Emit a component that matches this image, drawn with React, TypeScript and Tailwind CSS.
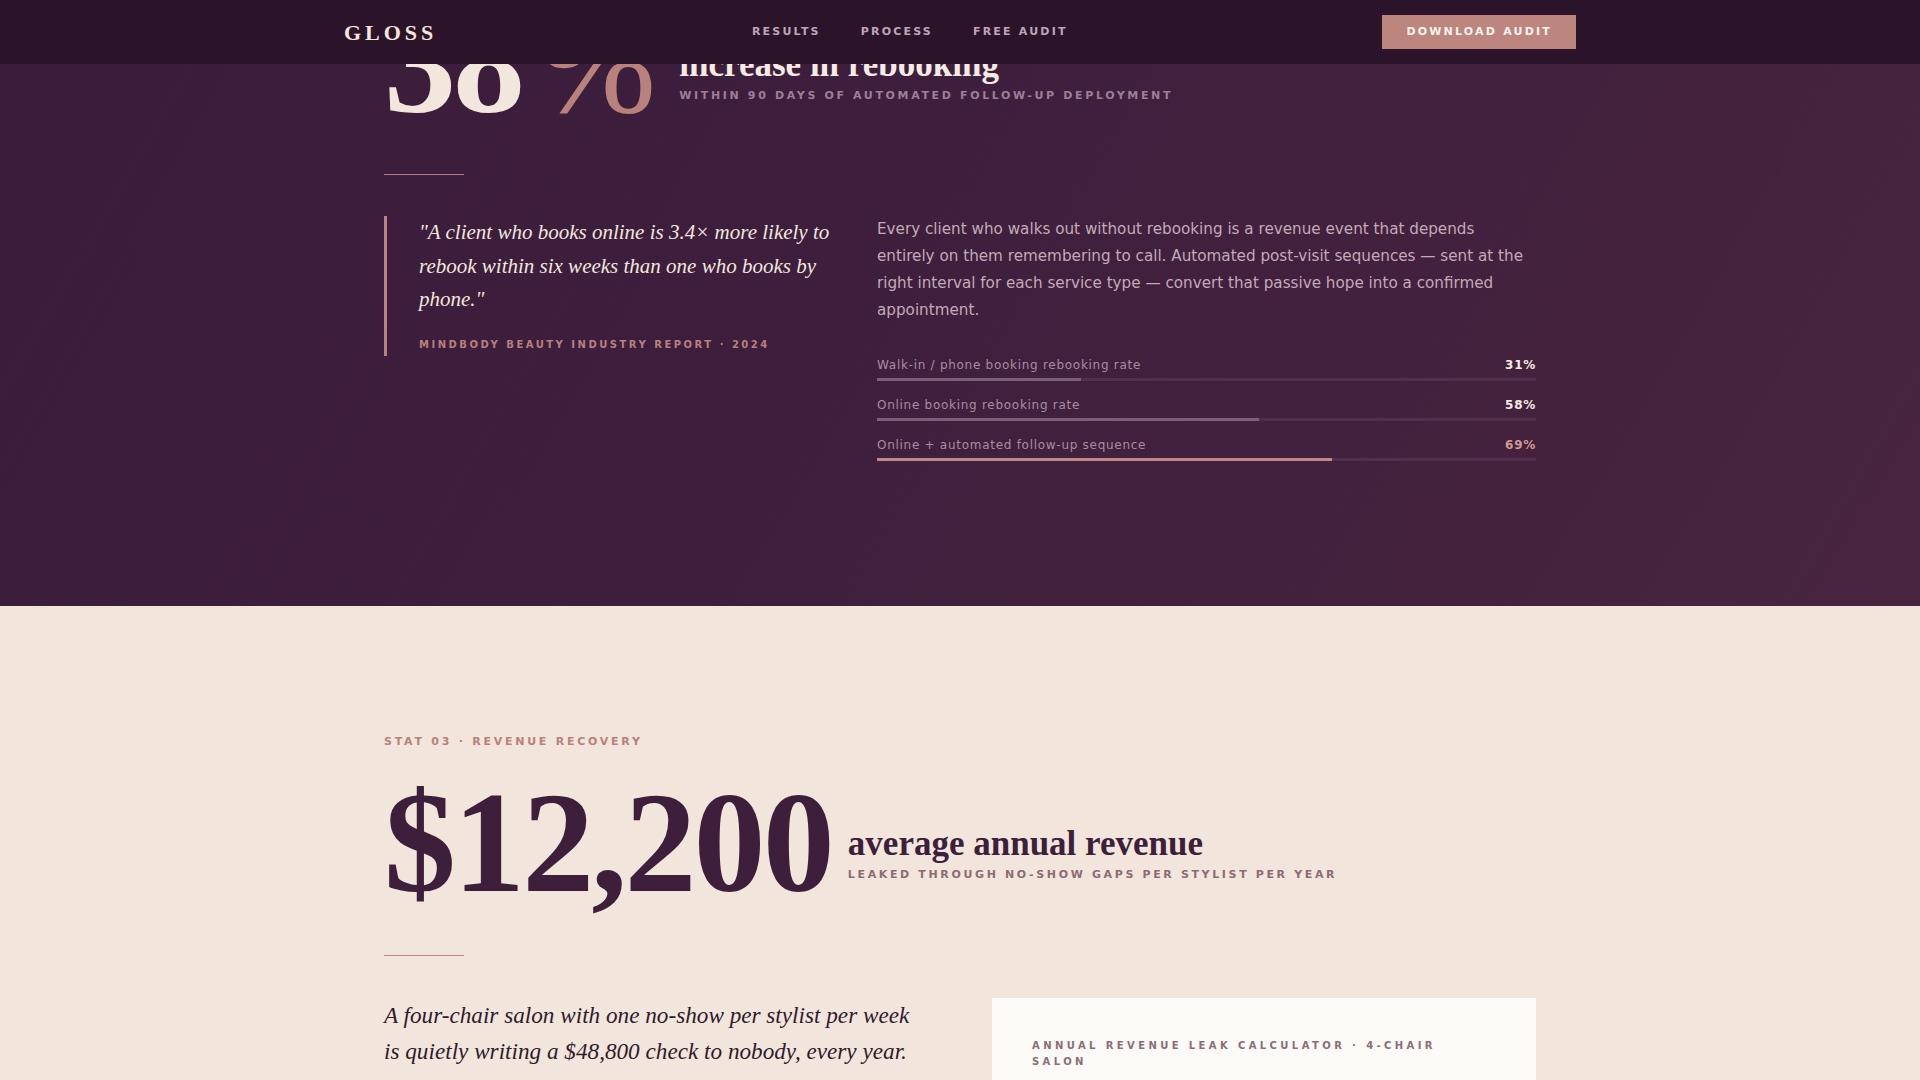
const bars = [
  { label: "Walk-in / phone booking rebooking rate", value: 31, accent: false },
  { label: "Online booking rebooking rate", value: 58, accent: false },
  { label: "Online + automated follow-up sequence", value: 69, accent: true },
];

const leakRows = [
  { label: "Stylists", value: "4" },
  { label: "No-shows per stylist / week", value: "1" },
  { label: "Average ticket", value: "$235" },
  { label: "Weeks open per year", value: "52" },
];

function NavBar() {
  return (
    <nav className="absolute inset-x-0 top-0 z-10 h-16 bg-[#2b1429]">
      <div className="mx-auto flex h-full max-w-7xl items-center justify-between px-6">
        <span className="font-['Liberation_Serif',serif] text-[22px] font-semibold tracking-[0.18em] text-[#f3e6dc]">
          GLOSS
        </span>
        <div className="flex gap-10 text-[11px] font-semibold tracking-[0.2em] text-[#bfa6b6]">
          <a href="#results">RESULTS</a>
          <a href="#process">PROCESS</a>
          <a href="#audit">FREE AUDIT</a>
        </div>
        <button className="bg-[#bc857d] px-6 py-[9px] text-[11px] font-bold leading-4 tracking-[0.2em] text-[#fbf3ee]">
          DOWNLOAD AUDIT
        </button>
      </div>
    </nav>
  );
}

export default function App() {
  return (
    <div className="relative h-screen overflow-hidden bg-[#f2e6dc] font-['DejaVu_Sans',sans-serif]">
      <NavBar />

      {/* stat 02 — rebooking */}
      <section className="bg-[linear-gradient(120deg,#3a1d3a_0%,#3d1f3d_45%,#48243f_100%)] pb-[145px]">
        <div className="mx-auto max-w-6xl">
          <div className="-mt-[8px] flex items-end gap-5">
            <div className="font-['Liberation_Serif',serif] text-[144px] font-bold leading-none tracking-[-0.02em] text-[#f3e6dc]">
              38<span className="ml-[14px] mr-[6px] font-normal text-[#b8817b]">%</span>
            </div>
            <div className="pb-8">
              <h2 className="font-['Liberation_Serif',serif] text-[35px] font-bold leading-[1.1] text-[#f6ebe2]">
                increase in rebooking
              </h2>
              <p className="mt-1 text-[11px] font-bold leading-[16px] tracking-[0.24em] text-[#9b8096]">
                WITHIN 90 DAYS OF AUTOMATED FOLLOW-UP DEPLOYMENT
              </p>
            </div>
          </div>

          <div className="mt-[38px] h-px w-20 bg-[#b8817b]" />

          <div className="mt-[41px] grid grid-cols-[1fr_659px] gap-10">
            <blockquote className="self-start border-l-[3px] border-[#b8817b] pb-[3px] pl-8">
              <p className="font-['Liberation_Serif',serif] text-[21px] italic leading-[1.6] text-[#f3e6dc]">
                "A client who books online is 3.4× more likely to rebook within six weeks than one who books by phone."
              </p>
              <p className="mt-5 text-[10px] font-bold leading-4 tracking-[0.25em] text-[#b8817b]">
                MINDBODY BEAUTY INDUSTRY REPORT · 2024
              </p>
            </blockquote>

            <div>
              <p className="text-[15.2px] leading-[27px] text-[#c2abb5]">
                Every client who walks out without rebooking is a revenue event that depends entirely on them
                remembering to call. Automated post-visit sequences — sent at the right interval for each service
                type — convert that passive hope into a confirmed appointment.
              </p>
              <div className="mt-[32px] flex flex-col gap-[15px]">
                {bars.map((bar) => (
                  <div key={bar.label}>
                    <div className="mb-1 flex items-center justify-between text-[12px] leading-[18px] tracking-[0.06em]">
                      <span className="text-[#a88d9f]">{bar.label}</span>
                      <span className={bar.accent ? "font-bold text-[#d29a92]" : "font-bold text-[#f6ebe2]"}>
                        {bar.value}%
                      </span>
                    </div>
                    <div className="h-[3px] w-full bg-[#4f2f4b]">
                      <div
                        className={bar.accent ? "h-full bg-[#c08882]" : "h-full bg-[#7b5e77]"}
                        style={{ width: `${bar.value}%` }}
                      />
                    </div>
                  </div>
                ))}
              </div>
            </div>
          </div>
        </div>
      </section>

      {/* stat 03 — revenue recovery */}
      <section className="pt-32 pb-24">
        <div className="mx-auto max-w-6xl">
          <p className="text-[11px] font-bold leading-4 tracking-[0.25em] text-[#b9807a]">STAT 03 · REVENUE RECOVERY</p>

          <div className="mt-[21px] flex items-end gap-4">
            <div className="font-['Liberation_Serif',serif] text-[144px] font-bold leading-none tracking-[-0.02em] text-[#3d1f3b]">
              $12,200
            </div>
            <div className="pb-8">
              <h2 className="font-['Liberation_Serif',serif] text-[35px] font-bold leading-[1.1] text-[#3d1f3b]">
                average annual revenue
              </h2>
              <p className="mt-1 text-[11px] font-bold leading-[16px] tracking-[0.24em] text-[#8c6c74]">
                LEAKED THROUGH NO-SHOW GAPS PER STYLIST PER YEAR
              </p>
            </div>
          </div>

          <div className="mt-10 h-px w-20 bg-[#c08882]" />

          <div className="mt-[42px] grid grid-cols-2 gap-16">
            <p className="pr-2 font-['Liberation_Serif',serif] text-[23.2px] italic leading-[35.5px] text-[#2f1b2c]">
              A four-chair salon with one no-show per stylist per week is quietly writing a $48,800 check to nobody,
              every year.
            </p>

            <div className="bg-[#fcfaf7] p-10">
              <p className="text-[10px] font-bold leading-4 tracking-[0.34em] text-[#8c6d73]">
                ANNUAL REVENUE LEAK CALCULATOR · 4-CHAIR SALON
              </p>
              <div className="mt-6 flex flex-col">
                {leakRows.map((row) => (
                  <div key={row.label} className="flex justify-between border-b border-[#eadcd2] py-3 text-[14px] text-[#4a3046]">
                    <span>{row.label}</span>
                    <span className="font-bold">{row.value}</span>
                  </div>
                ))}
              </div>
            </div>
          </div>
        </div>
      </section>
    </div>
  );
}
